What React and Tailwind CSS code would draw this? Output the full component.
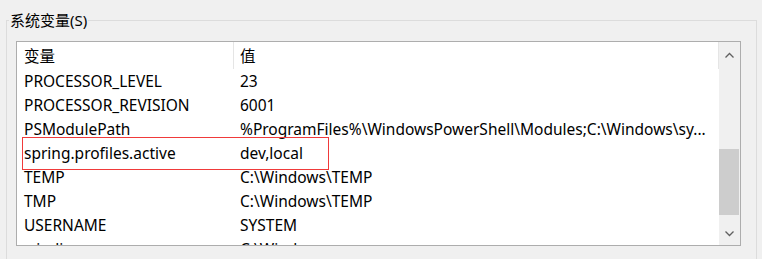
import React from 'react';

const rows = [
  ['PROCESSOR_LEVEL', '23'],
  ['PROCESSOR_REVISION', '6001'],
  ['PSModulePath', '%ProgramFiles%\\WindowsPowerShell\\Modules;C:\\Windows\\sy...'],
  ['spring.profiles.active', 'dev,local'],
  ['TEMP', 'C:\\Windows\\TEMP'],
  ['TMP', 'C:\\Windows\\TEMP'],
  ['USERNAME', 'SYSTEM'],
  ['windir', 'C:\\Windows'],
];

const Chevron = ({ down }) => (
  <svg width="9" height="6" viewBox="0 0 9 6" className="block">
    <path
      d={down ? 'M0.5 0.5 L4.5 4.5 L8.5 0.5' : 'M0.5 5.5 L4.5 1.5 L8.5 5.5'}
      fill="none"
      stroke="#606060"
      strokeWidth="1.3"
    />
  </svg>
);

export default function App() {
  return (
    <div
      className="w-[762px] h-[259px] bg-[#f0f0f0] overflow-hidden pt-[20px] pl-[6px] text-black"
      style={{ fontFamily: '"Noto Sans", "Noto Sans CJK SC", sans-serif' }}
    >
      {/* group box */}
      <div className="relative w-[751px] h-[300px] border border-[#dcdcdc] pl-[9px] pt-[20px]">
        <div className="absolute left-[2px] top-[-12px] bg-[#f0f0f0] px-[1px] text-[15px] leading-[22px]">
          系统变量(S)
        </div>

        {/* list view */}
        <div className="flex w-[725px] h-[205px] bg-white border border-[#adadad]">
          <div className="relative w-[702px] overflow-hidden text-[15.5px]">
            <div className="flex h-[27px]">
              <div className="w-[217px] border-r border-[#e5e5e5] pl-[7px] pt-[3px] flex items-center">变量</div>
              <div className="w-[485px] border-r border-[#e5e5e5] pl-[6px] pt-[3px] flex items-center">值</div>
            </div>
            {rows.map(([k, v]) => (
              <div key={k} className="flex h-[24px] items-center whitespace-nowrap pt-[1px]">
                <div className="w-[217px] pl-[7px]">{k}</div>
                <div className="w-[485px] pl-[6px] overflow-hidden">{v}</div>
              </div>
            ))}
            <div className="absolute left-[5px] top-[95px] w-[307px] h-[33px] border border-[#f03a3a]" />
          </div>

          {/* scrollbar */}
          <div className="w-[21px] bg-[#f0f0f0] flex flex-col">
            <div className="h-[24px] flex items-center justify-center pt-[1px]">
              <Chevron />
            </div>
            <div className="h-[83px]" />
            <div className="w-[20px] h-[66px] bg-[#cdcdcd]" />
            <div className="flex-1 flex items-end justify-center pb-[8px]">
              <Chevron down />
            </div>
          </div>
        </div>
      </div>
    </div>
  );
}
